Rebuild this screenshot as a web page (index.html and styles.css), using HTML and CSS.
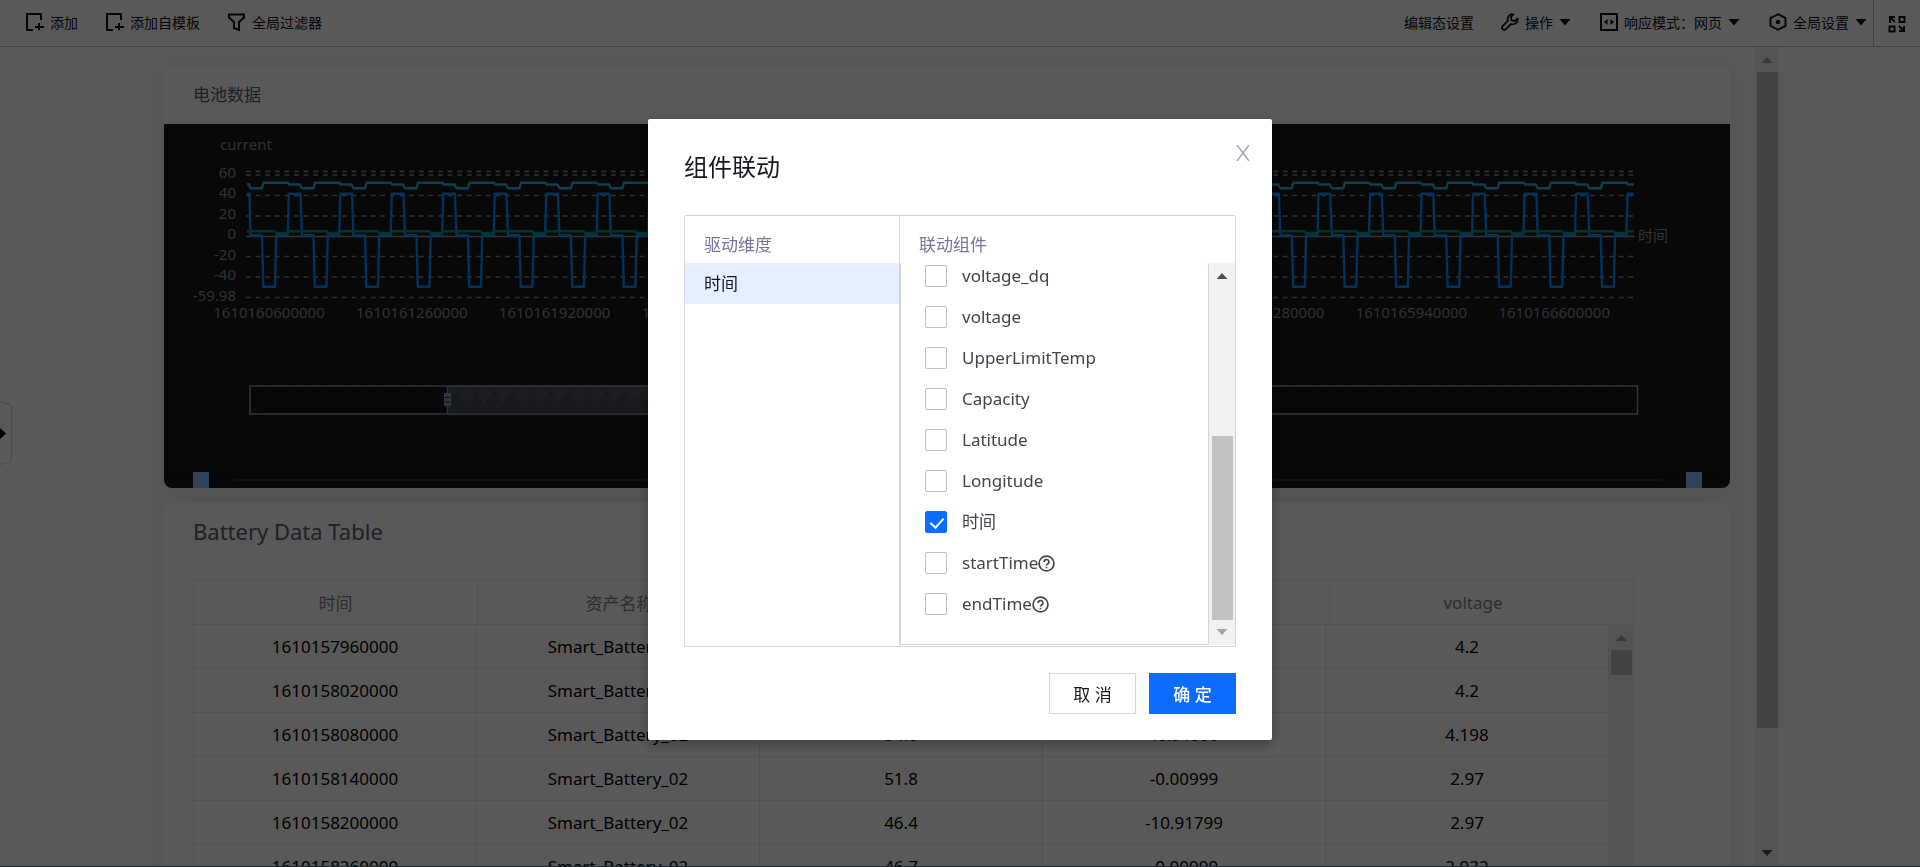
FILE: index.html
```html
<!DOCTYPE html>
<html lang="zh-CN">
<head>
<meta charset="utf-8">
<title>组件联动</title>
<link rel="stylesheet" href="styles.css">
</head>
<body>
<div class="shell">
  <header class="toolbar">
    <nav class="tools">
      <button class="tool" type="button">
        <svg class="icon" viewBox="0 0 18 18"><path d="M7 17H1V1h14v6M13 10v7M9 14h9" fill="none" stroke="currentColor" stroke-width="2"/></svg>添加
      </button>
      <button class="tool" type="button">
        <svg class="icon" viewBox="0 0 18 18"><path d="M7 17H1V1h14v6M13 10v7M9 14h9" fill="none" stroke="currentColor" stroke-width="2"/></svg>添加自模板
      </button>
      <button class="tool" type="button">
        <svg class="icon" viewBox="0 0 18 18"><path d="M1 1.500h15v3L11 9V17L6 15V9L1 4.500z" fill="none" stroke="currentColor" stroke-width="2"/></svg>全局过滤器
      </button>
    </nav>
    <nav class="settings">
      <button class="tool" type="button">编辑态设置</button>
      <button class="tool" type="button">
        <svg class="icon" viewBox="0 0 18 18"><path d="M12.500 1.300a5 5 0 0 0-5.600 6.600L1.700 13a2.200 2.200 0 0 0 3.200 3.200l5.200-5.200a5 5 0 0 0 6.600-5.600L13.800 8 10.600 7.400 9.900 4.200z" fill="none" stroke="currentColor" stroke-width="1.800" stroke-linejoin="round"/></svg>操作<span class="caret"></span>
      </button>
      <button class="tool mode" type="button">
        <svg class="icon" viewBox="0 0 18 18"><path d="M1 1h16v16H1z" fill="none" stroke="currentColor" stroke-width="2"/><path d="M7.500 6v6L4 9zM10.500 6v6L14 9z" fill="currentColor"/></svg>响应模式：网页<span class="caret"></span>
      </button>
      <button class="tool global" type="button">
        <svg class="icon" viewBox="0 0 18 18"><path d="M9 1.200l7.500 3.900v7.800l-7.500 3.900-7.500-3.900V5.100z" fill="none" stroke="currentColor" stroke-width="1.900"/><circle cx="9" cy="9" r="2.300" fill="currentColor"/></svg>全局设置<span class="caret"></span>
      </button>
      <button class="tool expand" type="button" aria-label="全屏">
        <svg class="icon" viewBox="0 0 18 18"><path d="M11.500 2H16.500V7H11.500zM1.500 11.500H6.500V16.500H1.500z" fill="none" stroke="currentColor" stroke-width="2"/><path d="M2 8V2h5M2 2l5 5M16 11v5h-5M16 16l-5-5" fill="none" stroke="currentColor" stroke-width="2"/></svg>
      </button>
    </nav>
  </header>

  <main class="stage">
    <button class="drawer" type="button" aria-label="展开">
      <svg viewBox="0 0 13 64"><path d="M0 .500L9 3Q11.500 4 11.500 7V57Q11.500 60 9 61L0 63.500" fill="#fff" stroke="#d0d0d0"/><path d="M0 27l6 5.500-6 5.500z" fill="#000"/></svg>
    </button>
    <div class="canvas">
      <section class="card chart-card">
        <h2 class="card-title">电池数据</h2>
        <svg class="chart" id="chart" viewBox="0 0 1566 364"></svg>
      </section>
      <section class="card table-card">
        <h2 class="table-title">Battery Data Table</h2>
        <div class="grid">
          <table class="head">
            <colgroup><col class="even"><col class="even"><col class="even"><col class="even"><col></colgroup>
            <thead><tr><th>时间</th><th>资产名称</th><th>voltage_dq</th><th>current</th><th class="last">voltage</th></tr></thead>
          </table>
          <div class="body-wrap">
            <table class="rows">
              <tbody>
                <tr><td>1610157960000</td><td>Smart_Battery_02</td><td>46.4</td><td>-10.91799</td><td>4.2</td></tr>
                <tr><td>1610158020000</td><td>Smart_Battery_02</td><td>46.7</td><td>-0.00999</td><td>4.2</td></tr>
                <tr><td>1610158080000</td><td>Smart_Battery_02</td><td>54.6</td><td>40.91999</td><td>4.198</td></tr>
                <tr><td>1610158140000</td><td>Smart_Battery_02</td><td>51.8</td><td>-0.00999</td><td>2.97</td></tr>
                <tr><td>1610158200000</td><td>Smart_Battery_02</td><td>46.4</td><td>-10.91799</td><td>2.97</td></tr>
                <tr><td>1610158260000</td><td>Smart_Battery_02</td><td>46.7</td><td>-0.00999</td><td>2.932</td></tr>
              </tbody>
            </table>
            <div class="scrollbar table-scroll"><span class="arrow up faded"></span><span class="thumb"></span></div>
          </div>
        </div>
      </section>
    </div>
    <div class="scrollbar page-scroll"><span class="arrow up faded"></span><span class="thumb"></span><span class="arrow down"></span></div>
  </main>
</div>

<div class="mask">
  <div class="modal" role="dialog" aria-labelledby="modal-title">
    <div class="modal-head">
      <h1 class="modal-title" id="modal-title">组件联动</h1>
      <button class="close" type="button" aria-label="关闭">
        <svg viewBox="0 0 14 16"><path d="M1 0l12 16M13 0L1 16" fill="none" stroke="currentColor" stroke-width="1.500"/></svg>
      </button>
    </div>
    <div class="picker">
      <div class="drivers">
        <h3 class="picker-title">驱动维度</h3>
        <button class="driver" type="button">时间</button>
      </div>
      <div class="targets">
        <h3 class="picker-title">联动组件</h3>
        <div class="target-area">
          <div class="options">
            <label class="option"><input type="checkbox">voltage_dq</label>
            <label class="option"><input type="checkbox">voltage</label>
            <label class="option"><input type="checkbox">UpperLimitTemp</label>
            <label class="option"><input type="checkbox">Capacity</label>
            <label class="option"><input type="checkbox">Latitude</label>
            <label class="option"><input type="checkbox">Longitude</label>
            <label class="option"><input type="checkbox" checked>时间</label>
            <label class="option"><input type="checkbox">startTime<svg class="help" viewBox="0 0 16 16"><circle cx="8" cy="8" r="7" fill="none" stroke="currentColor" stroke-width="1.600"/><path d="M5.800 6.500a2.200 2.200 0 1 1 3.200 1.900Q8 8.900 8 9.800M8 11v1.500" fill="none" stroke="currentColor" stroke-width="1.600"/></svg></label>
            <label class="option"><input type="checkbox">endTime<svg class="help" viewBox="0 0 16 16"><circle cx="8" cy="8" r="7" fill="none" stroke="currentColor" stroke-width="1.600"/><path d="M5.800 6.500a2.200 2.200 0 1 1 3.200 1.900Q8 8.900 8 9.800M8 11v1.500" fill="none" stroke="currentColor" stroke-width="1.600"/></svg></label>
          </div>
          <div class="scrollbar list-scroll"><span class="arrow up"></span><span class="thumb"></span><span class="arrow down faded"></span></div>
        </div>
      </div>
    </div>
    <div class="actions">
      <button class="btn" type="button">取 消</button>
      <button class="btn primary" type="button">确 定</button>
    </div>
  </div>
</div>
<script src="chart.js"></script>
</body>
</html>
```

FILE: styles.css
```css
* { box-sizing: border-box; }

body {
  margin: 0;
  overflow: hidden;
  background: #fff;
  color: #000;
  font-family: "Noto Sans", "Noto Sans CJK SC", sans-serif;
  font-size: 17px;
}

h1, h2, h3 { margin: 0; font-weight: 400; }

button {
  padding: 0;
  border: 0;
  background: none;
  color: inherit;
  font: inherit;
}

.shell {
  display: flex;
  flex-direction: column;
  height: 100vh;
  border-bottom: 1px solid #4a788f;
}

/* toolbar */
.toolbar {
  display: flex;
  flex: none;
  justify-content: space-between;
  height: 47px;
  padding-left: 26px;
  border-bottom: 1px solid #bbb;
  color: #111;
  font-size: 14px;
}
.tools, .settings { display: flex; align-items: center; }
.tools { gap: 28px; }
.settings { gap: 27px; }
.tool { display: flex; align-items: center; gap: 6px; height: 46px; padding-bottom: 2px; white-space: nowrap; }
.icon { width: 18px; height: 18px; }
.caret {
  width: 12px;
  height: 7px;
  background: currentColor;
  clip-path: polygon(0 0, 100% 0, 50% 100%);
}
.mode { margin-left: 2px; }
.global { margin-left: 2px; margin-right: -21px; }
.expand { padding: 2px 14px 0; border-left: 1px solid #bbb; }

/* stage */
.stage { position: relative; display: flex; flex: 1; min-height: 0; padding: 0 141px; }
.drawer { position: absolute; left: 0; top: 354px; width: 13px; height: 64px; }
.drawer svg { display: block; }
.canvas {
  display: flex;
  flex: 1;
  flex-direction: column;
  gap: 15px;
  min-width: 0;
  padding: 19px 25px 0 23px;
  overflow: hidden;
}
.card {
  flex: none;
  border-radius: 8px;
  background: #fff;
  box-shadow: 0 0 30px 10px rgba(20, 60, 120, .07);
  overflow: hidden;
}
.card-title {
  padding: 0 29px;
  color: #5c5c66;
  font-size: 17px;
  line-height: 58px;
}
.chart { display: block; width: 100%; background: #171717; font-size: 15px; }
.table-card { padding: 0 96px 0 29px; }
.table-title {
  height: 77px;
  color: #5c5c66;
  font-size: 22px;
  line-height: 56px;
}

/* table */
table { width: 100%; border-collapse: separate; border-spacing: 0; table-layout: fixed; }
.grid { border-left: 1px solid #e8e8e8; }
th, td { height: 44px; padding: 0; font-weight: 400; text-align: center; }
th { height: 45px; border: 1px solid #e8e8e8; border-left: 0; color: #808089; }
td { border: 1px solid #e8e8e8; border-top: 0; border-left: 0; }
.even { width: 284px; }
.last { padding-right: 17px; }
.body-wrap { display: flex; }
.rows { flex: 1; }

/* scrollbars */
.scrollbar { display: flex; flex: none; flex-direction: column; align-items: center; background: #f1f1f1; }
.thumb { flex: none; width: 21px; background: #c1c1c1; }
.arrow { flex: none; width: 11px; height: 6px; background: #505050; }
.up { clip-path: polygon(50% 0, 100% 100%, 0 100%); }
.down { margin-top: auto; clip-path: polygon(0 0, 100% 0, 50% 100%); }
.faded { background: #a3a3a3; }
.page-scroll { width: 24px; padding: 10px 0; }
.page-scroll .thumb { height: 656px; margin-top: 9px; }
.table-scroll { width: 25px; padding-top: 10px; }
.table-scroll .thumb { height: 25px; margin-top: 9px; }
.list-scroll { width: 26px; padding: 10px 0; }
.list-scroll .thumb { height: 184px; margin-top: 157px; }

/* modal */
.mask {
  position: fixed;
  inset: 0;
  display: flex;
  align-items: flex-start;
  justify-content: center;
  padding-top: 119px;
  background: rgba(0, 0, 0, .65);
}
.modal {
  width: 624px;
  padding: 0 36px 26px;
  border-radius: 2px;
  background: #fff;
  box-shadow: 0 4px 12px rgba(0, 0, 0, .3);
}
.modal-head { display: flex; justify-content: space-between; height: 96px; }
.modal-title { color: #17171f; font-size: 24px; line-height: 96px; }
.close { width: 14px; height: 16px; margin: 26px -14px 0 0; color: #a5a5b5; }
.close svg { display: block; }
.picker {
  display: flex;
  height: 432px;
  border: 1px solid #d4d4de;
  border-radius: 2px;
}
.drivers { width: 214px; }
.targets { display: flex; flex: 1; flex-direction: column; border-left: 1px solid #d4d4de; }
.picker-title { height: 47px; padding-left: 19px; color: #75759b; font-size: 17px; line-height: 58px; }
.driver {
  display: block;
  width: 100%;
  padding-left: 19px;
  border-radius: 2px;
  background: #e6efff;
  color: #17171f;
  line-height: 41px;
  text-align: left;
}
.target-area { display: flex; flex: 1; padding-bottom: 1px; }
.options {
  display: flex;
  flex: 1;
  flex-direction: column;
  gap: 19px;
  padding: 2px 0 0 24px;
  border: solid #d4d4de;
  border-width: 0 1px 1px 1px;
  border-radius: 2px;
}
.option { display: flex; align-items: center; height: 22px; color: #43434d; line-height: 22px; }
.option input {
  flex: none;
  width: 22px;
  height: 22px;
  margin: 0 15px 0 0;
  appearance: none;
  border: 1px solid #bdbdcc;
  border-radius: 2px;
  background: #fff;
}
.option input:checked { border-color: #0c6cff; background: #0c6cff; }
.option input:checked::after {
  display: block;
  width: 6px;
  height: 11px;
  margin: 3px 0 0 7px;
  border: solid #fff;
  border-width: 0 2px 2px 0;
  content: "";
  transform: rotate(42deg);
}
.help { width: 17px; height: 17px; }
.actions { display: flex; justify-content: flex-end; gap: 13px; padding-top: 26px; }
.btn { width: 87px; height: 41px; border: 1px solid #d4d4de; background: #fff; color: #17171f; }
.primary { border-color: #0c6cff; background: #0c6cff; color: #fff; font-weight: 500; }
```

FILE: chart.js
```js
(function () {
  var svg = document.getElementById('chart');
  var NS = 'http://www.w3.org/2000/svg';
  var period = 51.49;
  var cycles = 27;
  var right = 1470;

  function add(name, attrs, text) {
    var el = document.createElementNS(NS, name);
    for (var key in attrs) el.setAttribute(key, attrs[key]);
    if (text) el.textContent = text;
    svg.appendChild(el);
  }

  function label(x, y, text, anchor) {
    add('text', { x: x, y: y, fill: '#8f8f99', 'text-anchor': anchor }, text);
  }

  // Repeats the steps of one cycle over the plot and ends level at its right edge.
  function series(color, head, steps) {
    var points = head.slice();
    for (var i = 0; i < cycles; i++) {
      steps.forEach(function (p) {
        var x = p[0] + i * period;
        if (x < right) points.push([x, p[1]]);
      });
    }
    points.push([right, points[points.length - 1][1]]);
    add('polyline', {
      points: points.map(function (p) { return p.join(','); }).join(' '),
      fill: 'none', stroke: color, 'stroke-width': 2.4, 'stroke-linejoin': 'round'
    });
  }

  [47.5, 51, 71.5, 92, 132.5, 153, 173.5].forEach(function (y) {
    add('line', { x1: 82, x2: right, y1: y, y2: y, stroke: '#8c8c8c', 'stroke-width': 1.4, 'stroke-dasharray': '4.8 4.8' });
  });
  add('line', { x1: 82, x2: 1471, y1: 112.5, y2: 112.5, stroke: '#9a9a9a', 'stroke-width': 1.4 });

  series('#0d8cff', [[83, 69.7], [85.5, 69.7]],
    [[86.5, 111.3], [98, 111.3], [99.3, 162.7], [111, 162.7], [112.3, 111.3], [123.7, 111.3], [124.8, 69.7], [136.5, 69.7]]);
  series('#009684', [[83, 107.3]],
    [[111, 107.3], [112, 109], [123.5, 109], [124.5, 107.3]]);
  series('#2cb4d6', [[83, 60.3], [85, 60.3]],
    [[86.5, 64.3], [98, 64.3], [99.5, 58.7], [124, 58.7], [125, 60.5], [136, 60.5]]);

  label(82, 26, 'current', 'middle');
  label(1474, 117, '时间', 'start');
  [['60', 54], ['40', 74], ['20', 95], ['0', 115], ['-20', 136], ['-40', 156], ['-59.98', 177]].forEach(function (l) {
    label(72, l[1], l[0], 'end');
  });
  ['1610160600000', '1610161260000', '1610161920000', '1610162580000', '1610163240000',
    '1610163900000', '1610164560000', '1610165280000', '1610165940000', '1610166600000'].forEach(function (t, i) {
    label(105 + i * 142.8, 194, t, 'middle');
  });

  // Range slider under the plot.
  add('rect', { x: 283, y: 262, width: 700, height: 27, fill: '#565964', 'fill-opacity': 0.9 });
  var wave = 'M87 284';
  for (var x = 96; x < 1460; x += 18.6) {
    wave += 'L' + x + ' 284L' + (x + 4) + ' 275L' + (x + 8) + ' 273L' + (x + 11) + ' 266L' + (x + 14) + ' 273L' + (x + 16) + ' 276';
  }
  add('path', { d: wave + 'L1472 284V289H87z', fill: '#10253a', 'fill-opacity': 0.2, stroke: '#2a3540', 'stroke-opacity': 0.4 });
  add('rect', { x: 86, y: 262, width: 1387.5, height: 28, fill: 'none', stroke: '#999', 'stroke-width': 1.5 });
  add('line', { x1: 283.5, x2: 283.5, y1: 262, y2: 290, stroke: '#7d8ba3', 'stroke-width': 1.5 });
  add('rect', { x: 280, y: 269, width: 7, height: 13, fill: '#8796b0' });
  add('path', { d: 'M281 273.5h5M281 278h5', stroke: '#2b3445', 'stroke-width': 1.2 });

  // Timeline at the foot of the card.
  add('rect', { x: 29, y: 348, width: 16, height: 16, fill: '#92c2ff' });
  add('rect', { x: 1522, y: 348, width: 16, height: 16, fill: '#92c2ff' });
  add('line', { x1: 69, x2: 1498, y1: 356, y2: 356, stroke: '#28333f', 'stroke-width': 2 });
})();
```
